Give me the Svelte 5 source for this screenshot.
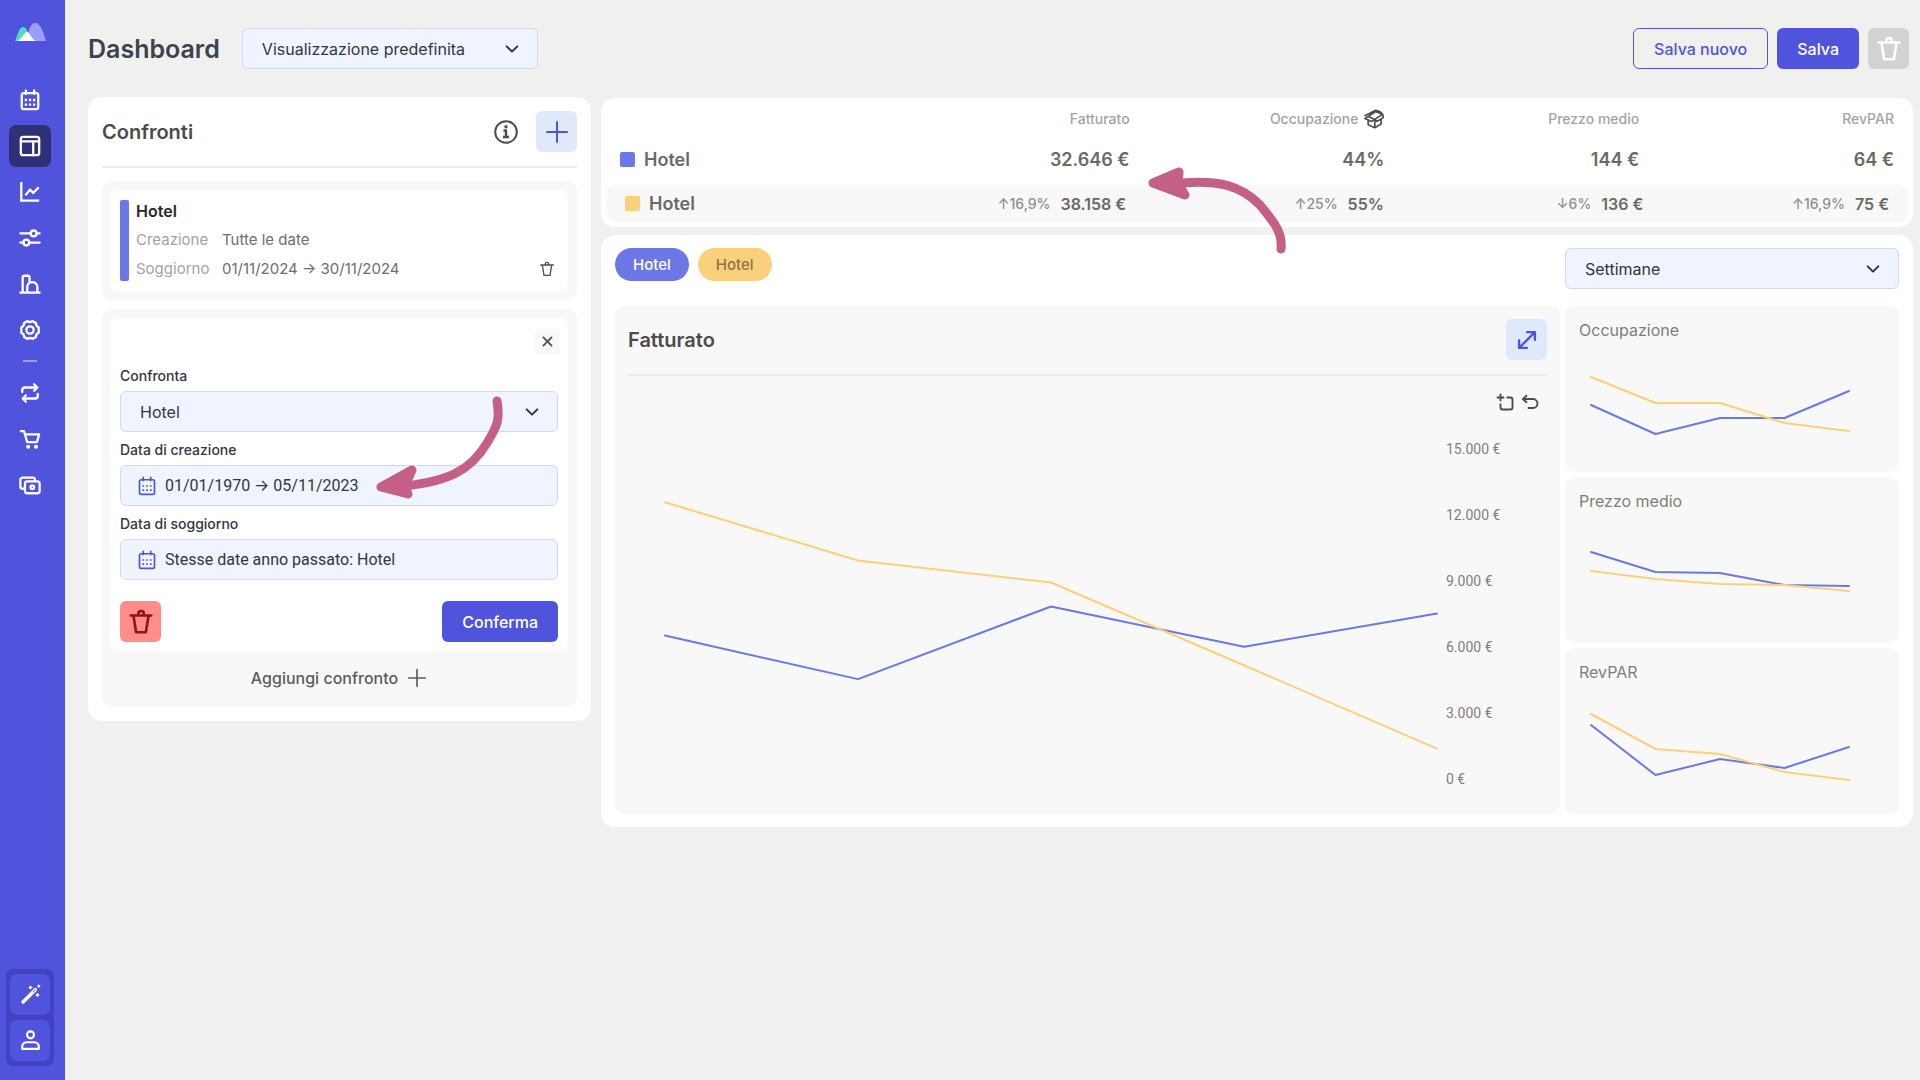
<script>
  const nav = [
    { name: 'Calendario', icon: 'calendar' },
    { name: 'Dashboard', icon: 'layout', active: true },
    { name: 'Andamento', icon: 'chart' },
    { name: 'Filtri', icon: 'sliders' },
    { name: 'Strutture', icon: 'house' },
    { name: 'Impostazioni', icon: 'gear' }
  ];
  const navExtra = [
    { name: 'Sincronizza', icon: 'repeat' },
    { name: 'Acquisti', icon: 'cart' },
    { name: 'Pagamenti', icon: 'money' }
  ];

  const columns = ['Fatturato', 'Occupazione', 'Prezzo medio', 'RevPAR'];
  const base = ['32.646 €', '44%', '144 €', '64 €'];
  const compared = [
    { change: '↑16,9%', value: '38.158 €' },
    { change: '↑25%', value: '55%' },
    { change: '↓6%', value: '136 €' },
    { change: '↑16,9%', value: '75 €' }
  ];

  const axis = ['15.000 €', '12.000 €', '9.000 €', '6.000 €', '3.000 €', '0 €'];

  // weekly values, drawn on a 0-15.000 scale
  const revenue = {
    blue: [6520, 4540, 7840, 6010, 7520],
    yellow: [12580, 9930, 8930, 5170, 1380]
  };

  // heights inside each 110px mini chart
  const minis = [
    { name: 'Occupazione', blue: [53, 82, 66, 66, 39], yellow: [25, 51, 51, 71, 79] },
    { name: 'Prezzo medio', blue: [29, 49, 50, 62, 63], yellow: [48, 56, 61, 62, 68] },
    { name: 'RevPAR', blue: [31, 81, 65, 74, 53], yellow: [20, 55, 60, 78, 86] }
  ];

  let view = $state('Visualizzazione predefinita');
  let compare = $state('Hotel');
  let period = $state('Settimane');
  let created = $state('01/01/1970 → 05/11/2023');
  let stay = $state('Stesse date anno passato: Hotel');

  function points(values, step, toY) {
    return values.map((v, i) => `${i * step},${toY(v)}`).join(' ');
  }
  const revenueY = (v) => 330 - (v / 15000) * 330;
</script>

{#snippet icon(name, size = 24)}
  <svg class="icon" width={size} height={size} viewBox="0 0 24 24" fill="none" stroke="currentColor" stroke-width="2" stroke-linecap="round" stroke-linejoin="round" aria-hidden="true">
    {#if name === 'calendar'}
      <path d="M5 4.500h14a2 2 0 0 1 2 2V20a2 2 0 0 1-2 2H5a2 2 0 0 1-2-2V6.500a2 2 0 0 1 2-2zM7.500 1.500v4M16.500 1.500v4" />
      <path d="M7.500 12h.01M12 12h.01M16.500 12h.01M7.500 17h.01M12 17h.01M16.500 17h.01" stroke-linecap="square" />
    {:else if name === 'layout'}
      <rect x="2" y="2" width="20" height="20" rx="2.500" />
      <path d="M2 7h20M15.500 7v15" />
    {:else if name === 'chart'}
      <path d="M2.500 1v20.500H22M7 15.500l5-6 3.500 3.500L21.500 7" stroke-linecap="butt" stroke-linejoin="miter" />
    {:else if name === 'sliders'}
      <path d="M1.500 7h11.500M19 7h3.500M1.500 17H5M11 17h11.500" />
      <circle cx="16" cy="7" r="3.200" /><circle cx="8" cy="17" r="3.200" />
    {:else if name === 'house'}
      <path d="M1.500 21.500h21M4 21V5a2 2 0 0 1 2-2h3.500a2 2 0 0 1 2 2v5M9 21v-6.500c1-3.500 4-4.500 5.500-4.500s4.500 1 5.500 4.500V21" />
    {:else if name === 'gear'}
      <path d="M9.500 2.300c1.500 1.200 3.500 1.200 5 0l4 2.200c-.2 2.200.8 3.700 3 4.500v6c-2.200.8-3.200 2.300-3 4.500l-4 2.200c-1.500-1.200-3.500-1.200-5 0l-4-2.200c.2-2.200-.8-3.700-3-4.500V9c2.200-.8 3.200-2.300 3-4.500z" />
      <circle cx="12" cy="12" r="4" />
    {:else if name === 'repeat'}
      <path d="M3.500 11V9a3 3 0 0 1 3-3H20M16.500 2.500L20 6l-3.500 3.500M20.500 13v2a3 3 0 0 1-3 3H4M7.500 14.500L4 18l3.500 3.500" />
    {:else if name === 'cart'}
      <path d="M2 3.500h3.500L9 15.500h10.500L22 7H7" />
      <circle cx="10" cy="20.500" r="1" fill="currentColor" /><circle cx="18.500" cy="20.500" r="1" fill="currentColor" />
    {:else if name === 'money'}
      <path d="M5 16H4a2.500 2.500 0 0 1-2.500-2.500v-7A2.500 2.500 0 0 1 4 4h11a2.500 2.500 0 0 1 2.500 2.500v1" />
      <rect x="6.500" y="8" width="16" height="13" rx="2.500" /><circle cx="14.500" cy="14.500" r="2" />
    {:else if name === 'wand'}
      <path d="M3.500 20.500l14-14" stroke-width="4" />
      <path d="M15 9l2.500-2.500" stroke="#5053dc" stroke-width="1" />
      <path d="M12 2.500v3M10.500 4h3M20 11v3M18.500 12.500h3M21.500 1.500v2M20.500 2.500h2" stroke-width="1.700" />
    {:else if name === 'person'}
      <circle cx="12" cy="5.500" r="4" />
      <path d="M2.500 21.500V19a5 5 0 0 1 5-5h9a5 5 0 0 1 5 5v2.500z" />
    {:else if name === 'trash'}
      <path d="M2.500 6h19M5 6l2.500 15.500h9L19 6M9.500 6V4a2 2 0 0 1 2-2h1a2 2 0 0 1 2 2v2" />
    {:else if name === 'info'}
      <circle cx="12" cy="12" r="10.800" />
      <path d="M9.500 10.500h2.500v6.500M9 17h6" stroke-linecap="butt" stroke-width="2.400" />
      <circle cx="12" cy="6.800" r="0.700" fill="currentColor" />
    {:else if name === 'plus'}
      <path d="M12 2v20M2 12h20" />
    {:else if name === 'close'}
      <path d="M3.500 3.500l17 17M20.500 3.500l-17 17" stroke-width="3.200" stroke-linecap="butt" />
    {:else if name === 'chevron'}
      <path d="M4 8l8 8 8-8" stroke-width="3" />
    {:else if name === 'expand'}
      <path d="M3.500 20.500l17-17M11 2.500h10.500V13M2.500 11v10.500H13" stroke-width="2.800" stroke-linecap="butt" />
    {:else if name === 'box'}
      <path d="M5 13v6l8 3.500 7.500-4.500v-6M13 14v8.500M5 9l8 3.500 9-6M5 9l-4 2.500 8 3.500 4-2.500M5 9l9-6 8.500 3.500L19 3l-5-1.500L1 8M22 6.500l1.500 3.500-8 5-2.500-2.500" />
    {:else if name === 'crop'}
      <path d="M6 1v10M1 6h10M6 14v5a3 3 0 0 0 3 3h10a3 3 0 0 0 3-3V9a3 3 0 0 0-3-3h-5" stroke-linecap="butt" stroke-width="2.500" />
    {:else if name === 'undo'}
      <path d="M8 3L2.500 8 8 13M3 8h13a6 6 0 0 1 0 12H9" stroke-linecap="butt" stroke-width="2.500" />
    {/if}
  </svg>
{/snippet}

<div class="app">
  <nav class="sidebar">
    <a class="logo" href="/" aria-label="Home">
      <svg width="31" height="18" viewBox="0 0 31 18" aria-hidden="true">
        <path d="M0 18C3 11 4 4 8 4s5 6 9 14z" fill="#4fd6cf" />
        <path d="M11 18C14 8 15 0 20 0s8 7 11 18z" fill="#9b9efb" />
        <path d="M2 18c5-2 7-9 10-9s4 7 9 9z" fill="#fff" />
      </svg>
    </a>
    <div class="nav">
      {#each nav as item}
        <a class="nav-item" class:active={item.active} href="/" aria-label={item.name}>{@render icon(item.icon, 22)}</a>
      {/each}
      <div class="dash"></div>
      {#each navExtra as item}
        <a class="nav-item" href="/" aria-label={item.name}>{@render icon(item.icon, 22)}</a>
      {/each}
    </div>
    <div class="nav-bottom">
      <button aria-label="Assistente">{@render icon('wand', 21)}</button>
      <button aria-label="Profilo">{@render icon('person', 21)}</button>
    </div>
  </nav>

  <div class="page">
    <header>
      <h1>Dashboard</h1>
      <div class="select view">
        <select bind:value={view} aria-label="Visualizzazione">
          <option>Visualizzazione predefinita</option>
        </select>
        <span class="chevron">{@render icon('chevron', 16)}</span>
      </div>
      <div class="actions">
        <button class="btn outline">Salva nuovo</button>
        <button class="btn primary">Salva</button>
        <button class="square grey" aria-label="Elimina">{@render icon('trash', 26)}</button>
      </div>
    </header>

    <main>
      <section class="comparisons">
        <div class="title-row">
          <h2>Confronti</h2>
          <button class="info" aria-label="Informazioni">{@render icon('info')}</button>
          <button class="square light" aria-label="Aggiungi">{@render icon('plus')}</button>
        </div>

        <div class="group">
          <div class="summary">
            <div class="bar"></div>
            <div class="summary-text">
              <h3>Hotel</h3>
              <dl>
                <dt>Creazione</dt>
                <dd>Tutte le date</dd>
                <dt>Soggiorno</dt>
                <dd>01/11/2024 → 30/11/2024</dd>
              </dl>
            </div>
            <button class="small-trash" aria-label="Elimina confronto">{@render icon('trash', 16)}</button>
          </div>
        </div>

        <div class="group">
          <form class="editor" onsubmit={(e) => e.preventDefault()}>
            <button type="button" class="close" aria-label="Chiudi">{@render icon('close', 13)}</button>
            <label for="compare">Confronta</label>
            <div class="select">
              <select id="compare" bind:value={compare}>
                <option>Hotel</option>
              </select>
              <span class="chevron">{@render icon('chevron', 16)}</span>
            </div>
            <label for="created">Data di creazione</label>
            <div class="date">
              {@render icon('calendar', 20)}
              <input id="created" bind:value={created} />
            </div>
            <label for="stay">Data di soggiorno</label>
            <div class="date">
              {@render icon('calendar', 20)}
              <input id="stay" bind:value={stay} />
            </div>
            <div class="editor-actions">
              <button type="button" class="square red" aria-label="Elimina confronto">{@render icon('trash', 26)}</button>
              <button class="btn primary">Conferma</button>
            </div>
            <svg class="arrow arrow-left" width="128" height="104" viewBox="0 0 128 104" aria-hidden="true">
              <path d="M121 6C124 24 122 30 111 48C94 77 70 86 30 91" />
              <path class="head" d="M36 75L5 92L32 99L29 91Z" />
            </svg>
          </form>
          <button class="add">Aggiungi confronto {@render icon('plus', 20)}</button>
        </div>
      </section>

      <div class="results">
        <section class="stats">
          <table>
            <thead>
              <tr>
                <th aria-label="Confronto"></th>
                {#each columns as column}
                  <th scope="col">{column}{#if column === 'Occupazione'}{@render icon('box', 20)}{/if}</th>
                {/each}
              </tr>
            </thead>
            <tbody>
              <tr class="base">
                <th scope="row"><span class="swatch blue"></span>Hotel</th>
                {#each base as value}
                  <td>{value}</td>
                {/each}
              </tr>
              <tr class="compared">
                <th scope="row"><span class="swatch yellow"></span>Hotel</th>
                {#each compared as cell}
                  <td><span class="change">{cell.change}</span>{cell.value}</td>
                {/each}
              </tr>
            </tbody>
          </table>
          <svg class="arrow arrow-right" width="138" height="90" viewBox="0 0 138 90" aria-hidden="true">
            <path d="M133 84C135 67 125 56 112 40C92 20 70 15 34 18" />
            <path class="head" d="M31 7L5 18L37 30L30 18Z" />
          </svg>
        </section>

        <section class="charts">
          <div class="chart-bar">
            <div class="pills">
              <button class="pill blue">Hotel</button>
              <button class="pill yellow">Hotel</button>
            </div>
            <div class="select period">
              <select bind:value={period} aria-label="Periodo">
                <option>Settimane</option>
              </select>
              <span class="chevron">{@render icon('chevron', 16)}</span>
            </div>
          </div>

          <div class="chart-grid">
            <div class="main-chart">
              <div class="title-row">
                <h2>Fatturato</h2>
                <button class="square light" aria-label="Espandi">{@render icon('expand', 20)}</button>
              </div>
              <div class="tools">
                <button aria-label="Zoom">{@render icon('crop', 18)}</button>
                <button aria-label="Ripristina">{@render icon('undo', 18)}</button>
              </div>
              <div class="plot">
                <svg class="lines" viewBox="0 0 772 330" preserveAspectRatio="none" role="img" aria-label="Fatturato">
                  <polyline class="blue" points={points(revenue.blue, 193, revenueY)} />
                  <polyline class="yellow" points={points(revenue.yellow, 193, revenueY)} />
                </svg>
                <div class="axis">
                  {#each axis as tick}
                    <span>{tick}</span>
                  {/each}
                </div>
              </div>
            </div>

            <div class="minis">
              {#each minis as mini}
                <div class="mini">
                  <h3>{mini.name}</h3>
                  <svg class="lines" viewBox="0 0 258 110" preserveAspectRatio="none" role="img" aria-label={mini.name}>
                    <polyline class="blue" points={points(mini.blue, 64.5, (v) => v)} />
                    <polyline class="yellow" points={points(mini.yellow, 64.5, (v) => v)} />
                  </svg>
                </div>
              {/each}
            </div>
          </div>
        </section>
      </div>
    </main>
  </div>
</div>

<style>
  :global(body) {
    margin: 0;
    background: #f0f0ee;
  }
  .app {
    display: flex;
    min-height: 100vh;
    font-family: Inter, "Liberation Sans", sans-serif;
    font-size: 16px;
    line-height: 20px;
    color: #33363d;
  }
  .app * {
    box-sizing: border-box;
  }
  .icon {
    display: block;
    flex: none;
  }
  h1, h2, h3, dl, dd {
    margin: 0;
  }
  button {
    font: inherit;
    color: inherit;
    border: 0;
    padding: 0;
    background: none;
    cursor: pointer;
  }

  /* sidebar */
  .sidebar {
    position: sticky;
    top: 0;
    flex: none;
    width: 65px;
    height: 100vh;
    display: flex;
    flex-direction: column;
    padding: 23px 0 14px 6px;
    background: #5053dc;
    color: #fff;
  }
  .sidebar .icon {
    stroke-width: 2.5;
  }
  .logo {
    display: block;
    height: 18px;
    margin-left: 9px;
  }
  .nav {
    display: flex;
    flex-direction: column;
    gap: 4px;
    margin: 38px 0 auto 3px;
  }
  .nav-item {
    width: 42px;
    height: 42px;
    display: grid;
    place-items: center;
    border-radius: 7px;
    color: #fff;
  }
  .nav-item.active {
    background: #2f3178;
  }
  .dash {
    width: 14px;
    height: 2px;
    margin: 5px 14px 6px;
    background: #9a9cf0;
  }
  .nav-bottom {
    width: 48px;
    display: grid;
    gap: 5px;
    padding: 5px 4px;
    border-radius: 7px;
    background: #4143c0;
  }
  .nav-bottom button {
    height: 41px;
    display: grid;
    place-items: center;
    border-radius: 7px;
    background: #5053dc;
  }

  /* header */
  .page {
    flex: 1;
    min-width: 0;
    padding: 28px 7px 28px 23px;
  }
  header {
    display: flex;
    align-items: center;
    padding-right: 4px;
  }
  h1 {
    font-size: 25px;
    line-height: 32px;
    font-weight: 600;
    color: #3b434d;
    margin-right: 22px;
  }
  .view {
    width: 296px;
  }
  .actions {
    display: flex;
    gap: 9px;
    margin-left: auto;
  }
  .btn {
    height: 41px;
    padding: 0 20px;
    border-radius: 6px;
    font-weight: 500;
  }
  .primary {
    background: #5053dc;
    color: #fff;
  }
  .outline {
    border: 1px solid #5053dc;
    color: #5053dc;
  }
  .square {
    width: 41px;
    height: 41px;
    display: grid;
    place-items: center;
    border-radius: 6px;
  }
  .grey {
    background: #d2d2d0;
    color: #fff;
  }
  .light {
    background: #e0e9fa;
    color: #5053dc;
  }
  .red {
    background: #ff8d8a;
    color: #8f1414;
  }
  .grey .icon, .red .icon {
    stroke-width: 2.4;
  }

  .select {
    position: relative;
  }
  .select select, .date {
    width: 100%;
    height: 41px;
    border: 1px solid #cddaf2;
    border-radius: 6px;
    background: #eff4fe;
  }
  .select select {
    display: block;
    appearance: none;
    padding: 0 44px 0 19px;
    font: inherit;
    color: #33363d;
  }
  .chevron {
    position: absolute;
    right: 18px;
    top: 13px;
    pointer-events: none;
  }

  main {
    display: flex;
    align-items: flex-start;
    gap: 10px;
    margin-top: 28px;
  }

  /* comparisons */
  .comparisons {
    flex: none;
    width: 503px;
    display: grid;
    gap: 9px;
    padding: 14px;
    border-radius: 14px;
    background: #fff;
  }
  .title-row {
    display: flex;
    align-items: center;
    padding-bottom: 14px;
    border-bottom: 2px solid #ececec;
  }
  .comparisons .title-row {
    margin-bottom: 4px;
  }
  h2 {
    font-size: 20px;
    line-height: 26px;
    font-weight: 600;
    color: #4c4c4a;
    margin-right: auto;
  }
  .info {
    margin-right: 18px;
    color: #4c4c4a;
  }
  .group {
    padding: 9px 9px 9px 8px;
    border-radius: 9px;
    background: #f8f8f8;
  }
  .summary {
    display: flex;
    align-items: stretch;
    padding: 10px;
    border-radius: 9px;
    background: #fff;
  }
  .bar {
    width: 9px;
    border-radius: 2px;
    background: #6b78e6;
  }
  .summary-text {
    padding: 1px 0 2px 7px;
    flex: 1;
  }
  h3 {
    font-size: 16px;
    line-height: 20px;
    font-weight: 600;
    color: #26282c;
  }
  dl {
    display: grid;
    grid-template-columns: 86px 1fr;
    row-gap: 9px;
    margin-top: 9px;
    font-size: 15px;
    line-height: 20px;
  }
  dt {
    color: #a3a39f;
  }
  dd {
    color: #6e6e6a;
  }
  .small-trash {
    align-self: flex-end;
    margin: 0 3px 4px 0;
    color: #4c4c4a;
  }
  .editor {
    position: relative;
    padding: 11px 10px 9px;
    border-radius: 9px;
    background: #fff;
  }
  .close {
    width: 25px;
    height: 25px;
    display: grid;
    place-items: center;
    margin: 0 -2px 4px auto;
    border-radius: 4px;
    background: #f8f8f8;
    color: #4c4c4a;
  }
  label {
    display: block;
    padding: 8px 0 5px;
    font-size: 14px;
    line-height: 20px;
    font-weight: 500;
  }
  .date {
    display: flex;
    align-items: center;
    gap: 8px;
    padding: 0 16px;
    color: #5053dc;
  }
  .date input {
    flex: 1;
    min-width: 0;
    padding: 0;
    border: 0;
    outline: 0;
    background: none;
    font: 16px/20px Roboto, Inter, sans-serif;
    color: #33363d;
  }
  .editor-actions {
    display: flex;
    justify-content: space-between;
    margin-top: 21px;
  }
  .add {
    width: 100%;
    height: 47px;
    display: flex;
    justify-content: center;
    align-items: center;
    gap: 9px;
    padding-top: 6px;
    color: #5c5c59;
    font-weight: 500;
  }

  /* hand-drawn arrows over the panels */
  .arrow {
    position: absolute;
    fill: none;
    stroke: #c46088;
    stroke-width: 9;
    stroke-linecap: round;
    stroke-linejoin: round;
    pointer-events: none;
  }
  .arrow .head {
    fill: #c46088;
  }
  .arrow-left {
    right: 64px;
    top: 77px;
  }
  .arrow-right {
    left: 547px;
    top: 67px;
    z-index: 1;
  }

  /* stats */
  .results {
    flex: 1;
    min-width: 0;
    display: grid;
    grid-template-columns: minmax(0, 1fr);
    gap: 8px;
    padding-top: 1px;
  }
  .stats {
    position: relative;
    padding: 5px;
    border-radius: 14px;
    background: #fff;
  }
  table, thead, tbody {
    display: block;
  }
  tr {
    display: grid;
    grid-template-columns: repeat(5, 1fr);
    align-items: center;
    padding: 0 14px;
  }
  th, td {
    display: flex;
    align-items: center;
    justify-content: flex-end;
    padding: 0;
    white-space: nowrap;
  }
  thead tr {
    height: 31px;
  }
  thead th {
    gap: 6px;
    font-size: 14px;
    font-weight: 500;
    color: #a3a39f;
  }
  thead .icon {
    color: #4c4c4a;
  }
  tbody {
    font-size: 18px;
    font-weight: 600;
    color: #6a6a62;
  }
  tbody th {
    gap: 9px;
    justify-content: flex-start;
    font-weight: 600;
  }
  .swatch {
    width: 15px;
    height: 15px;
    border-radius: 2px;
  }
  .blue {
    background: #6b78e6;
  }
  .yellow {
    background: #fbd07c;
  }
  .base {
    height: 51px;
  }
  .compared {
    grid-template-columns: 244fr 258fr 258fr 260fr 246fr;
    height: 37px;
    padding: 0 19px;
    border-radius: 9px;
    background: #f8f8f8;
  }
  .compared td {
    gap: 10px;
    font-size: 16px;
  }
  .change {
    font-size: 14px;
    font-weight: 500;
    color: #8f8f89;
  }

  /* charts */
  .charts {
    padding: 13px 14px;
    border-radius: 14px;
    background: #fff;
  }
  .chart-bar {
    display: flex;
    justify-content: space-between;
    align-items: flex-start;
    margin-bottom: 17px;
  }
  .pills {
    display: flex;
    gap: 9px;
  }
  .pill {
    height: 33px;
    padding: 0 18px;
    border-radius: 17px;
    font-size: 15px;
    font-weight: 500;
  }
  .pill.blue {
    color: #fff;
  }
  .pill.yellow {
    color: #8a7448;
  }
  .period {
    width: 334px;
  }
  .chart-grid {
    display: flex;
    gap: 5px;
  }
  .main-chart, .mini {
    border-radius: 9px;
    background: #f8f8f8;
  }
  .main-chart {
    flex: 1;
    min-width: 0;
    padding: 13px 13px 34px;
  }
  .tools {
    display: flex;
    justify-content: flex-end;
    gap: 7px;
    padding: 17px 8px 0 0;
    color: #4c4c4a;
  }
  .plot {
    display: flex;
    gap: 9px;
    margin: 38px 35px 0 37px;
  }
  .lines {
    display: block;
    overflow: visible;
    fill: none;
    stroke-width: 2;
    stroke-linecap: round;
    stroke-linejoin: round;
  }
  .lines polyline {
    vector-effect: non-scaling-stroke;
  }
  .lines .blue {
    stroke: #6b78e6;
  }
  .lines .yellow {
    stroke: #fbd07c;
  }
  .plot .lines {
    flex: 1;
    min-width: 0;
    height: 330px;
  }
  .axis {
    width: 66px;
    height: 350px;
    margin: -10px 0;
    display: flex;
    flex-direction: column;
    justify-content: space-between;
    font: 14px/20px Roboto, sans-serif;
    color: #7f7f7a;
  }
  .minis {
    width: 334px;
    display: grid;
    gap: 5px;
  }
  .mini {
    padding: 14px 14px 10px;
  }
  .mini h3 {
    font-weight: 400;
    color: #7f7f75;
  }
  .mini .lines {
    width: calc(100% - 48px);
    height: 110px;
    margin: 12px 0 0 12px;
  }
</style>
